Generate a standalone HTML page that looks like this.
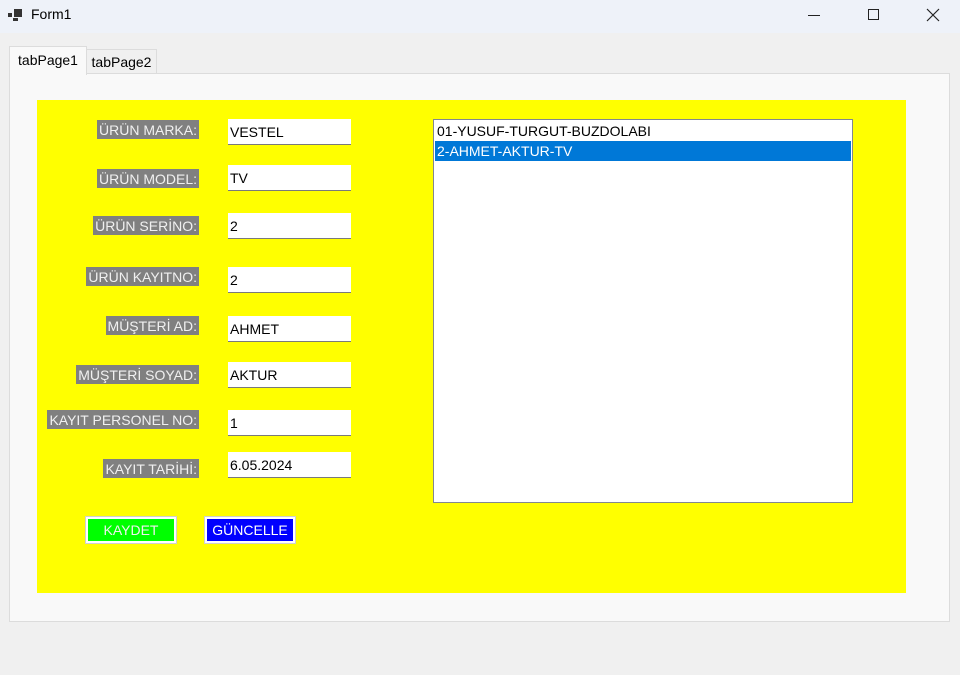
<!DOCTYPE html><html><head><style>
body{margin:0;width:960px;height:675px;background:#f0f0f0;font-family:"Segoe UI","Liberation Sans","DejaVu Sans",sans-serif;position:relative;overflow:hidden}
.a{position:absolute}
.lbl{position:absolute;background:#808080;color:#f0f0f0;font-size:14px;height:19px;line-height:21px;padding:0 2px;right:761px;white-space:nowrap}
.tb{position:absolute;left:228px;width:123px;height:26px;background:#fff;border-bottom:1px solid #7a7a7a;font-size:14px;line-height:27px;padding-left:2px;box-sizing:border-box;color:#000}
.btn{position:absolute;top:517px;height:26px;width:90px;box-sizing:border-box;border:2px solid #fff;outline:1px solid #d0d0d0;font-size:14px;line-height:22px;text-align:center}
</style></head><body>
<div class="a" style="left:0;top:0;width:960px;height:33px;background:#eef2f9"></div>
<svg class="a" style="left:8px;top:8px" width="16" height="16"><rect x="6" y="1" width="8" height="8" fill="#333"/><rect x="0" y="5" width="4" height="4" fill="#333"/><rect x="5" y="10" width="5" height="3" fill="#333"/></svg>
<div class="a" style="left:31px;top:6px;font-size:14px;color:#000">Form1</div>
<div class="a" style="left:808px;top:15px;width:12px;height:1px;background:#222"></div>
<div class="a" style="left:868px;top:9px;width:9px;height:9px;border:1px solid #222"></div>
<svg class="a" style="left:926px;top:8px" width="14" height="14"><path d="M1 1L13 13M13 1L1 13" stroke="#222" stroke-width="1.2"/></svg>
<div class="a" style="left:9px;top:73px;width:939px;height:547px;background:#f9f9f9;border:1px solid #dcdcdc"></div>
<div class="a" style="left:9px;top:46px;width:76px;height:28px;background:#f9f9f9;border:1px solid #dcdcdc;border-bottom:none;font-size:14px;line-height:26px;text-align:center">tabPage1</div>
<div class="a" style="left:86px;top:49px;width:69px;height:23px;background:#f0f0f0;border:1px solid #dcdcdc;border-bottom:none;font-size:14px;line-height:25px;text-align:center">tabPage2</div>
<div class="a" style="left:37px;top:100px;width:869px;height:493px;background:#ff0"></div>
<div class="lbl" style="top:120px">ÜRÜN MARKA:</div>
<div class="lbl" style="top:169px">ÜRÜN MODEL:</div>
<div class="lbl" style="top:216px">ÜRÜN SERİNO:</div>
<div class="lbl" style="top:267px">ÜRÜN KAYITNO:</div>
<div class="lbl" style="top:316px">MÜŞTERİ AD:</div>
<div class="lbl" style="top:365px">MÜŞTERİ SOYAD:</div>
<div class="lbl" style="top:410px">KAYIT PERSONEL NO:</div>
<div class="lbl" style="top:459px">KAYIT TARİHİ:</div>
<div class="tb" style="top:119px">VESTEL</div>
<div class="tb" style="top:165px">TV</div>
<div class="tb" style="top:213px">2</div>
<div class="tb" style="top:267px">2</div>
<div class="tb" style="top:316px">AHMET</div>
<div class="tb" style="top:362px">AKTUR</div>
<div class="tb" style="top:410px">1</div>
<div class="tb" style="top:452px">6.05.2024</div>
<div class="btn" style="left:86px;background:#0f0;color:#f0f0f0">KAYDET</div>
<div class="btn" style="left:205px;background:#00f;color:#fff">GÜNCELLE</div>
<div class="a" style="left:433px;top:119px;width:418px;height:382px;background:#fff;border:1px solid #828790;font-size:14px">
<div style="height:21px;line-height:22px;padding-left:3px">01-YUSUF-TURGUT-BUZDOLABI</div>
<div style="margin:0 1px;height:20px;line-height:20px;padding-left:2px;background:#0078d7;color:#fff">2-AHMET-AKTUR-TV</div>
</div>
</body></html>
